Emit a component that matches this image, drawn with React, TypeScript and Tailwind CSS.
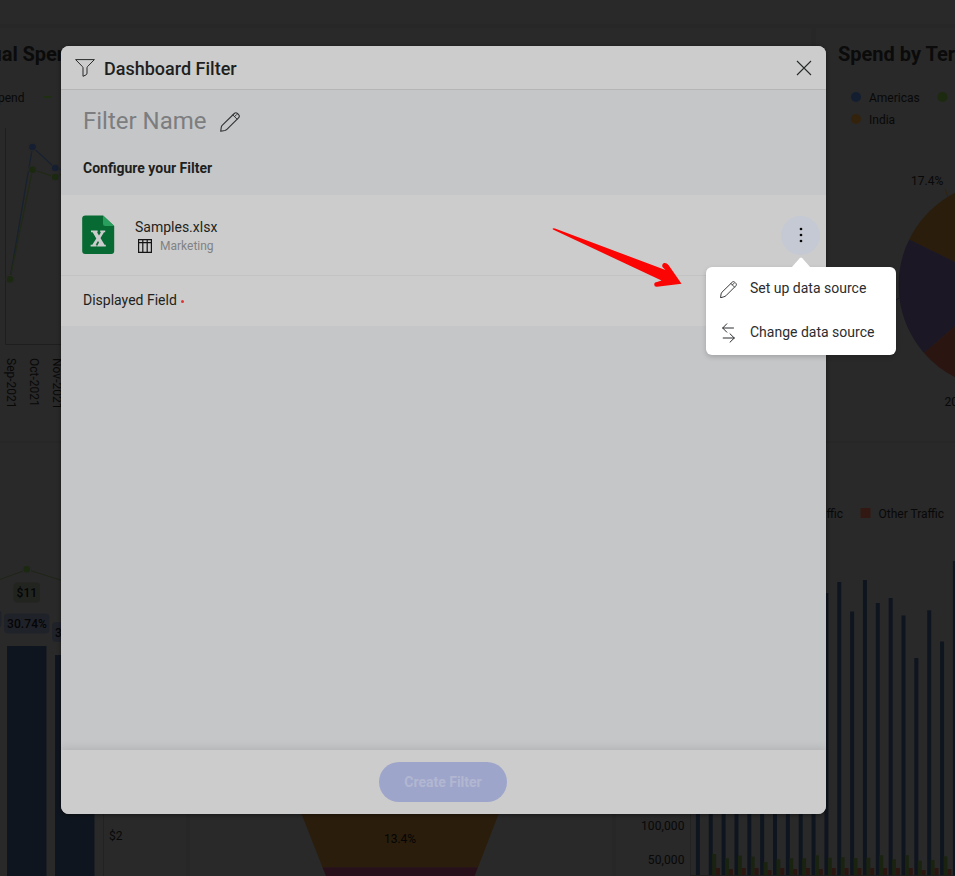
import React from 'react';

const barTops = [570, 580, 575, 590, 560, 600, 610, 590, 585, 600, 593, 582, 611.5, 580, 603, 598, 615.5, 658, 610.3, 641.5, 561];
const greenTops = [854, 858.3, 855.6, 856.7, 862, 859.3, 858.3, 858.3, 855.4, 857.8, 857.3, 858, 857.8, 855.3, 859.3, 855.3, 860.7, 860, 856.5];
const redTops = [868, 869, 868, 868, 870, 868, 869, 868, 869, 868, 868, 868, 868, 868, 868, 868, 870, 868, 869];
const STEP = 12.85;

function PencilIcon({ size, className = '' }: { size: number; className?: string }) {
  return (
    <svg width={size} height={size} viewBox="0 0 20 20" fill="none" stroke="currentColor" strokeWidth="1.1" strokeLinejoin="round" strokeLinecap="round" className={className}>
      <path d="M0.7 19.3 L1.3 15.2 C1.5 14.2 1.8 13.7 2.4 13.1 L14.3 1.5 C15.3 0.5 16.4 0.5 17.4 1.5 L18.6 2.7 C19.6 3.7 19.5 4.8 18.5 5.8 L6.9 17.4 C6.3 18 5.8 18.3 4.9 18.5 Z" />
      <path d="M12.9 3 L17 7.1 M14.6 4.6 L16.6 2.6" strokeWidth="1" />
    </svg>
  );
}

function SpendLineCard() {
  return (
    <section className="w-[811px] shrink-0 overflow-hidden">
      <svg width="811" height="413" viewBox="0 28 811 413">
        <text x="17.8" y="60.5" textAnchor="end" fontSize="20" fontWeight="700" fill="#0b0b0b">Annual</text>
        <text x="22.5" y="60.5" fontSize="20" fontWeight="700" fill="#0b0b0b">Spend vs Budget</text>
        <text x="24.5" y="101.5" textAnchor="end" fontSize="12" fill="#080808">Spend</text>
        <rect x="43.5" y="96" width="8" height="2" fill="#1f3012" />
        <path d="M5.5 128V344.5H70" fill="none" stroke="#1e1e1e" />
        <path d="M10 279 L32.5 147 L55 168 L70 172" fill="none" stroke="#18212f" strokeWidth="1.3" />
        <path d="M10 279 L32.5 169.5 L55 177 L70 170" fill="none" stroke="#202a16" strokeWidth="1.3" />
        <g stroke="#292929" strokeWidth="1.2">
          <circle cx="32.5" cy="147" r="3.9" fill="#151f31" />
          <circle cx="55.2" cy="168" r="3.9" fill="#151f31" />
          <circle cx="32.5" cy="169.7" r="3.9" fill="#1b2910" />
          <circle cx="55.2" cy="177" r="3.9" fill="#1b2910" />
          <circle cx="10" cy="279.3" r="3.9" fill="#1b2910" />
        </g>
        <g fontSize="12" fill="#080808">
          <text transform="translate(7.4 358) rotate(90)">Sep-2021</text>
          <text transform="translate(30 358) rotate(90)">Oct-2021</text>
          <text transform="translate(53 358) rotate(90)">Nov-2021</text>
        </g>
      </svg>
    </section>
  );
}

function TerritoryPieCard() {
  return (
    <section className="flex-1 overflow-hidden">
      <svg width="139" height="413" viewBox="816 28 139 413">
        <text x="838" y="60.5" fontSize="20" fontWeight="700" fill="#0b0b0b">Spend by Territory</text>
        <circle cx="856" cy="97" r="5" fill="#131e31" />
        <text x="869" y="101.5" fontSize="12" fill="#080808">Americas</text>
        <circle cx="942.5" cy="97" r="5" fill="#1c2b10" />
        <circle cx="856" cy="119" r="5" fill="#33230c" />
        <text x="869" y="123.5" fontSize="12" fill="#080808">India</text>
        <text x="911" y="184.5" fontSize="12" fill="#080808">17.4%</text>
        <path d="M945 188.5 L948 197" stroke="#33230c" />
        <path d="M1002 285 L909.2 239.5 A103.5 103.5 0 0 1 1002 181.5 Z" fill="#2a1d0c" />
        <path d="M1002 285 L924 353 A103.5 103.5 0 0 1 909.2 239.5 Z" fill="#1b1724" />
        <path d="M1002 285 L924 353 A103.5 103.5 0 0 0 1002 388.5 Z" fill="#2b1511" />
        <path d="M896 300 L899 298" stroke="#1b1724" />
        <text x="944.5" y="406" fontSize="12" fill="#080808">20.6%</text>
      </svg>
    </section>
  );
}

function ConversionCard() {
  return (
    <section className="w-[186px] shrink-0 overflow-hidden">
      <svg width="186" height="435" viewBox="0 441 186 435">
        <path d="M0 579.5 L27 569.5 L70 583" fill="none" stroke="#1e2517" />
        <circle cx="26.7" cy="569.3" r="4" fill="#1b2910" stroke="#292929" strokeWidth="1.5" />
        <rect x="13.5" y="582.5" width="26.5" height="20" rx="4" fill="#222420" />
        <rect x="-10" y="610" width="11.5" height="18" rx="4" fill="#20222a" />
        <rect x="4" y="613.5" width="45.5" height="20" rx="4" fill="#20222a" />
        <rect x="52" y="622" width="45" height="20" rx="4" fill="#20222a" />
        <g fontSize="12" fontWeight="500" fill="#050505" letterSpacing="0.1">
          <text x="16.5" y="597">$11</text>
          <text x="7" y="627.5">30.74%</text>
          <text x="55" y="636.5">30.21%</text>
        </g>
        <rect x="7" y="646" width="39.5" height="230" fill="#0f151e" />
        <rect x="55" y="655" width="39.5" height="221" fill="#0f151e" />
        <path d="M103.5 800V876" stroke="#222222" />
        <text x="109" y="839.5" fontSize="12" fill="#080808">$2</text>
      </svg>
    </section>
  );
}

function FunnelCard() {
  return (
    <section className="w-[422px] shrink-0 overflow-hidden">
      <svg width="422" height="435" viewBox="190 441 422 435">
        <path d="M296 800 H504 L478 867.3 H322.5 Z" fill="#2a1d0c" />
        <path d="M322.5 867.3 H478 L474.6 876 H326 Z" fill="#271019" />
        <text x="400" y="843" textAnchor="middle" fontSize="12" fill="#050505">13.4%</text>
      </svg>
    </section>
  );
}

function TrafficCard() {
  return (
    <section className="flex-1 overflow-hidden">
      <svg width="339" height="435" viewBox="616 441 339 435">
        <g fontSize="12" fill="#080808">
          <text x="843" y="517.5" textAnchor="end">Paid Traffic</text>
          <text x="878.5" y="517.5">Other Traffic</text>
          <text x="684.5" y="829.5" textAnchor="end" letterSpacing="0.1">100,000</text>
          <text x="684.5" y="864" textAnchor="end" letterSpacing="0.1">50,000</text>
        </g>
        <rect x="860.5" y="508" width="10" height="10" fill="#321812" />
        <path d="M690.5 800V876" stroke="#222222" />
        {barTops.map((t, i) => (
          <rect key={i} x={695.9 + i * STEP} y={t} width="4" height={876 - t} fill="#0f151e" />
        ))}
        {greenTops.map((t, i) => (
          <rect key={i} x={712.2 + i * STEP} y={t} width="3.9" height={876 - t} fill="#192310" />
        ))}
        {redTops.map((t, i) => (
          <rect key={i} x={716.1 + i * STEP} y={t} width="3.9" height={876 - t} fill="#2b1511" />
        ))}
        <path d="M690 875.6H955" stroke="#1f1f1f" />
      </svg>
    </section>
  );
}

export default function App() {
  return (
    <div className="relative h-[876px] w-[955px] overflow-hidden bg-[#292929] font-['Roboto',sans-serif]">
      <div className="flex h-full flex-col">
        <div className="h-7 shrink-0 border-b-4 border-[#272727]" />
        <div className="flex h-[413px] shrink-0 gap-[5px] bg-[linear-gradient(90deg,transparent_811px,#272727_811px,#272727_816px,transparent_816px)]">
          <SpendLineCard />
          <TerritoryPieCard />
        </div>
        <div className="flex h-[435px] shrink-0 gap-1 border-t-2 border-[#272727] bg-[linear-gradient(90deg,transparent_186px,#272727_186px,#272727_190px,transparent_190px,transparent_612px,#272727_612px,#272727_616px,transparent_616px)] [&_svg]:-mt-0.5">
          <ConversionCard />
          <FunnelCard />
          <TrafficCard />
        </div>
      </div>

      <div className="absolute inset-0 pt-[46px] pl-[61px]">
        <div className="flex h-[768px] w-[765px] flex-col overflow-hidden rounded-lg bg-[#c5c6c8] text-[#1e1f20] shadow-[0_1px_4px_rgba(0,0,0,0.45)]">
          <header className="flex h-11 shrink-0 items-center border-b border-[#b5b5b6] bg-[#cccccc] pr-3.5 pl-3.5">
            <svg width="20" height="18" viewBox="0 0 20 18" fill="none" stroke="#27292b" strokeWidth="1" strokeLinejoin="round" className="mt-px">
              <path d="M0.6 0.6 H19.4 L12.4 7.7 Q12 8.2 12 9 V14.2 Q12 15.3 11 15.9 L8 17.3 V9 Q8 8.2 7.5 7.7 Z" />
            </svg>
            <h1 className="ml-[9px] flex-1 pt-0.5 text-lg font-medium">Dashboard Filter</h1>
            <svg width="16" height="16" viewBox="0 0 16 16" fill="none" stroke="#27292b" strokeWidth="1.1">
              <path d="M1 1 L15 15 M15 1 L1 15" />
            </svg>
          </header>

          <div className="h-[105px] shrink-0 pt-[15px] pl-[22px]">
            <div className="flex h-8 items-center">
              <span className="text-2xl text-[#7c7d7f]">Filter Name</span>
              <PencilIcon size={20} className="mt-0.5 ml-[13px] text-[#303234]" />
            </div>
            <h2 className="mt-[21px] text-sm font-bold">Configure your Filter</h2>
          </div>

          <div className="flex h-[81px] shrink-0 items-center border-b border-[#c3c3c4] bg-[#cccccc] pr-1.5 pl-[21px]">
            <svg width="33" height="40" viewBox="0 0 33 40">
              <path d="M3.5 0.5 H21 L32.2 11 V36 Q32.2 39 29.2 39 H3.2 Q0.2 39 0.2 36 V3.5 Q0.2 0.5 3.5 0.5Z" fill="#066a32" />
              <path d="M21 0.5 L32.2 11 H23.5 Q21 11 21 8.5Z" fill="#289f5c" />
              <path d="M9 15.5 H15.6 V17.2 H15 L17 20.6 L19 17.2 H18.2 V15.5 H23.2 V17.2 H22 L18.5 23 L22.5 29.8 H23.8 V31.5 H14.8 L17 27.6 L16 25.9 L13.7 29.8 H14.6 V31.5 H8.6 V29.8 H10.3 L14.3 23.4 L10.6 17.2 H9Z" fill="#cccccc" />
            </svg>
            <div className="ml-5 flex-1 pt-0.5">
              <div className="text-sm leading-5">Samples.xlsx</div>
              <div className="flex items-center pl-[3px] text-xs leading-[18px] text-[#818283]">
                <svg width="14" height="14" viewBox="0 0 14 14" fill="none" stroke="#141414" strokeWidth="1.2" className="-mt-px">
                  <path d="M0.6 0.6 H13.4 V13.3 H0.6Z M0.6 3.7 H13.4 M4.8 0.6 V13.3 M9.2 0.6 V13.3" />
                </svg>
                <span className="ml-2">Marketing</span>
              </div>
            </div>
            <button className="flex size-[39px] items-center justify-center rounded-full bg-[#c5c9d3]">
              <svg width="4" height="16" viewBox="0 0 4 16" fill="#080808">
                <circle cx="2" cy="2" r="1.35" />
                <circle cx="2" cy="8" r="1.35" />
                <circle cx="2" cy="14" r="1.35" />
              </svg>
            </button>
          </div>

          <div className="flex h-[50px] shrink-0 items-center bg-[#cccccc] pb-0.5 pl-[22px] text-sm">
            Displayed Field
            <span className="mt-[3px] ml-1 size-[3.5px] rounded-full bg-[#df3538]" />
          </div>

          <div className="flex-1" />

          <footer className="flex h-16 shrink-0 items-center justify-center bg-[#cccccc] pr-px shadow-[0_-1px_9px_rgba(0,0,0,0.12)]">
            <button className="h-10 w-32 rounded-full bg-[#9ea5cb] text-sm font-bold text-[#b2b7d1]">Create Filter</button>
          </footer>
        </div>
      </div>

      <svg className="absolute top-[215px] left-[540px]" width="160" height="80" viewBox="0 0 160 80">
        <path d="M12.5 14 Q13 12.8 15 13.5 L125.5 55 L122.5 52 Q121.5 49 124 48 Q126.5 47.5 128.5 50 L141.5 68.7 L117 71.8 Q114.2 72 114.2 69.5 Q114.2 67.2 117 67 L121.5 65.5 L13.5 14.8Z" fill="#fb0504" />
      </svg>

      <div className="absolute top-[267px] left-[706px] h-[88px] w-[190px] rounded-md bg-white text-[#2b2c2e] shadow-[0_2px_5px_rgba(0,0,0,0.18)]">
        <svg className="absolute -top-[10px] left-[85px]" width="20" height="11" viewBox="0 0 20 11">
          <path d="M0 11 L8.7 1.2 Q10 0 11.3 1.2 L20 11Z" fill="#fff" />
        </svg>
        <div className="flex h-11 items-center pl-3.5 text-sm">
          <PencilIcon size={17} />
          <span className="-mt-0.5 ml-[13px]">Set up data source</span>
        </div>
        <div className="flex h-11 items-center pl-4 text-sm">
          <svg width="13" height="20" viewBox="0 0 13 20" fill="none" stroke="currentColor" strokeWidth="1" strokeLinecap="round" strokeLinejoin="round">
            <path d="M4.8 0.8 L0.7 5 L4.8 9.2 M0.7 5 H11.5 M8 10.8 L12.3 15 L8 19.2 M12.3 15 H1.2" />
          </svg>
          <span className="-mt-0.5 ml-[15px]">Change data source</span>
        </div>
      </div>
    </div>
  );
}
